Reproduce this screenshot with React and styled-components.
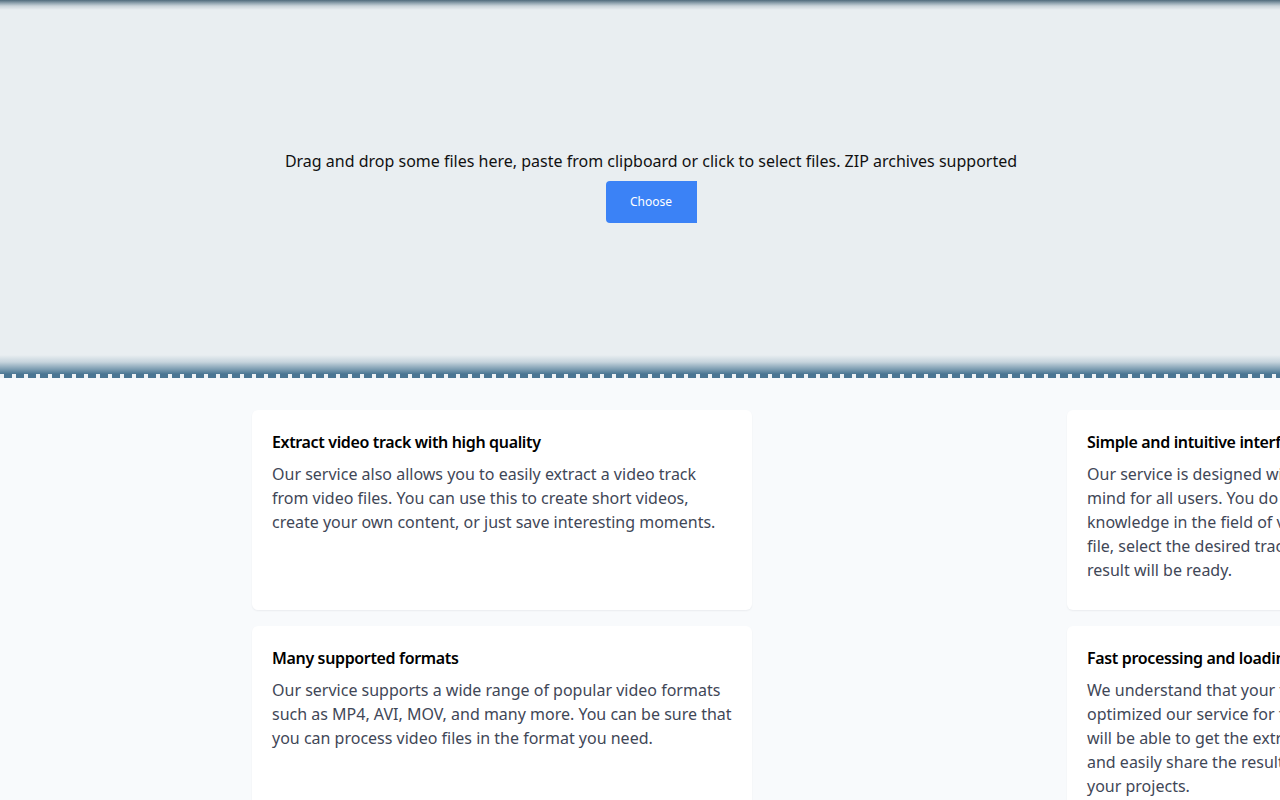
import React from "react";
import styled, { createGlobalStyle } from "styled-components";

const Global = createGlobalStyle`
  html, body { margin: 0; padding: 0; }
  body {
    background: #f8fafc;
    font-family: "Noto Sans", "Open Sans", sans-serif;
    overflow-x: hidden;
    width: 1280px;
  }
`;

const Page = styled.div`
  width: 1280px;
  min-height: 800px;
  overflow: hidden;
`;

const DropZone = styled.section`
  height: 374px;
  display: flex;
  flex-direction: column;
  align-items: center;
  justify-content: center;
  padding-left: 22px;
  padding-bottom: 2px;
  box-sizing: border-box;
  background:
    linear-gradient(to bottom, #4f6a7b 0px, #8ea2ae 3px, #c9d3d9 6px, #e9eef1 10px, #e9eef1 355px, #c6d4dd 362px, #7f9fb3 369px, #4b7693 374px);
`;

const DashStrip = styled.div`
  height: 4px;
  background: repeating-linear-gradient(
    to right,
    #eef2f5 0px,
    #eef2f5 4px,
    #4b7693 4px,
    #4b7693 12px
  );
`;

const DropText = styled.p`
  margin: 0 0 8px;
  font-size: 16px;
  line-height: 24px;
  color: #111;
`;

const ChooseButton = styled.button`
  width: 91px;
  height: 42px;
  border: none;
  background: #3b82f6;
  color: #fff;
  font-family: "Noto Sans", sans-serif;
  font-size: 12px;
  line-height: 16px;
  padding: 0 0 1px;
  border-radius: 4px 0 0 4px;
  cursor: pointer;
`;

const Features = styled.div`
  display: grid;
  grid-template-columns: 500px 500px;
  column-gap: 315px;
  row-gap: 16px;
  padding: 32px 0 0 252px;
`;

const Card = styled.article`
  background: #fff;
  border-radius: 6px;
  box-shadow: 0 1px 2px rgba(15, 23, 42, 0.06);
  padding: 20px 20px 28px;
  min-height: 200px;
  box-sizing: border-box;
`;

const CardTitle = styled.h3`
  margin: 0 0 8px;
  font-size: 16px;
  line-height: 24px;
  font-weight: 600;
  letter-spacing: -0.35px;
  color: #000;
`;

const CardText = styled.p`
  margin: 0;
  font-size: 16px;
  line-height: 24px;
  color: #3f4757;
`;

const features = [
  {
    title: "Extract video track with high quality",
    text: "Our service also allows you to easily extract a video track from video files. You can use this to create short videos, create your own content, or just save interesting moments.",
  },
  {
    title: "Simple and intuitive interface",
    text: "Our service is designed with simplicity and convenience in mind for all users. You do not need to have any special knowledge in the field of video processing - just upload your file, select the desired track and click the button, and the result will be ready.",
  },
  {
    title: "Many supported formats",
    text: "Our service supports a wide range of popular video formats such as MP4, AVI, MOV, and many more. You can be sure that you can process video files in the format you need.",
  },
  {
    title: "Fast processing and loading",
    text: "We understand that your time is valuable, so we have optimized our service for fast processing of large files. You will be able to get the extracted video track in a few seconds and easily share the result with your friends or colleagues in your projects.",
  },
];

export default function App() {
  return (
    <Page>
      <Global />
      <DropZone>
        <DropText>
          Drag and drop some files here, paste from clipboard or click to select files. ZIP archives supported
        </DropText>
        <ChooseButton>Choose</ChooseButton>
      </DropZone>
      <DashStrip />
      <Features>
        {features.map((f) => (
          <Card key={f.title}>
            <CardTitle>{f.title}</CardTitle>
            <CardText>{f.text}</CardText>
          </Card>
        ))}
      </Features>
    </Page>
  );
}
